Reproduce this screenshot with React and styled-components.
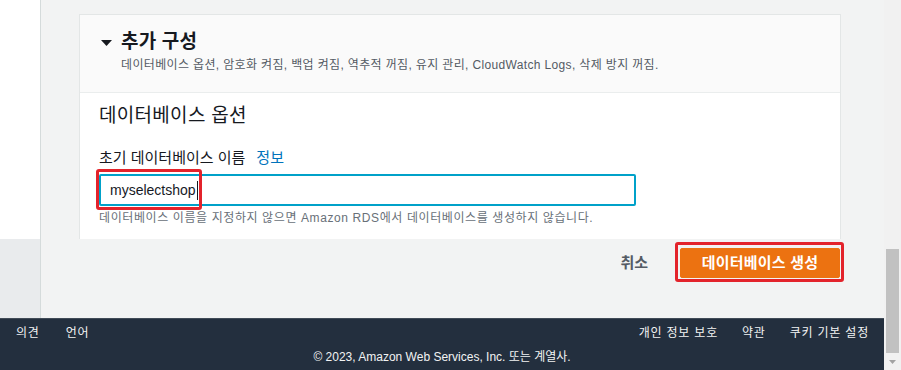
import React from "react";
import styled, { createGlobalStyle } from "styled-components";

const GlobalStyle = createGlobalStyle`
  html, body { margin: 0; padding: 0; background: #f2f3f3; overflow: hidden; }
  body {
    font-family: "Liberation Sans", "Noto Sans CJK KR", sans-serif;
    color: #16191f;
  }
  * { box-sizing: border-box; }
`;

const Page = styled.div`
  display: flex;
  width: 901px;
  height: 370px;
  overflow: hidden;
`;

const Viewport = styled.div`
  flex: 0 0 884px;
  display: flex;
  flex-direction: column;
  min-width: 0;
`;

const Band = styled.div`
  display: flex;
  flex: 0 0 ${(p) => p.$height}px;
  overflow: hidden;
`;

const NavStrip = styled.div`
  flex: 0 0 41px;
  background: ${(p) => (p.$tone === "shade" ? "#e9ebed" : "#ffffff")};
  border-right: 1px solid #d5dbdb;
`;

const Main = styled.main`
  flex: 1;
  min-width: 0;
  background: #f2f3f3;
  padding: 14px 43px 0 38px;
`;

const Card = styled.section`
  background: #ffffff;
  border: 1px solid #e3e6e6;
  border-bottom: none;
`;

const CardHeader = styled.header`
  background: #fafafa;
  border-bottom: 1px solid #eaeded;
  padding: 16px 20px 19px 21px;
`;

const HeadingRow = styled.div`
  display: flex;
  align-items: center;
  gap: 9px;
`;

const Caret = styled.svg`
  flex: 0 0 auto;
  margin-top: 2px;
`;

const Heading = styled.h2`
  margin: 0;
  font-size: 19px;
  line-height: 22px;
  font-weight: 700;
  letter-spacing: 0.2px;
  color: #16191f;
`;

const Summary = styled.p`
  margin: 4px 0 0 20px;
  font-size: 12px;
  line-height: 16px;
  letter-spacing: 0.35px;
  color: #545b64;
  white-space: nowrap;
`;

const CardBody = styled.div`
  padding: 11px 19px 24px 19px;
`;

const SectionTitle = styled.h3`
  margin: 0;
  font-size: 19px;
  line-height: 24px;
  font-weight: 400;
  letter-spacing: 0.3px;
  color: #16191f;
`;

const Label = styled.div`
  margin-top: 20px;
  display: flex;
  align-items: center;
  gap: 11px;
  font-size: 15px;
  line-height: 20px;
  color: #16191f;
`;

const InfoLink = styled.a`
  color: #0073bb;
  text-decoration: none;
`;

const Field = styled.div`
  position: relative;
  margin-top: 6px;
  width: 537px;
  height: 32px;
  border: 2px solid #00a1c9;
  border-radius: 2px;
  background: #ffffff;
  display: flex;
  align-items: center;
  padding: 0 9px;
  font-size: 14px;
  line-height: 16px;
  color: #16191f;
`;

const TextCursor = styled.span`
  width: 1px;
  height: 19px;
  background: #16191f;
  margin-left: 1px;
`;

const Hint = styled.div`
  margin-top: 4px;
  font-size: 12px;
  line-height: 16px;
  letter-spacing: 0.6px;
  color: #687078;
  white-space: nowrap;
`;

const Highlight = styled.span`
  position: absolute;
  left: ${(p) => p.$left}px;
  top: ${(p) => p.$top}px;
  right: ${(p) => p.$right}px;
  bottom: ${(p) => p.$bottom}px;
  border: 3px solid #e3232b;
  border-radius: 3px;
  pointer-events: none;
`;

const ActionBar = styled.div`
  flex: 1;
  display: flex;
  justify-content: flex-end;
  align-items: flex-start;
  gap: 12px;
  padding: 9px 44px 0 0;
  background: #f2f3f3;
`;

const LinkButton = styled.button`
  height: 30px;
  padding: 0 20px;
  border: none;
  background: transparent;
  font-family: inherit;
  font-size: 15px;
  line-height: 30px;
  font-weight: 700;
  color: #545b64;
`;

const ButtonWrap = styled.div`
  position: relative;
`;

const PrimaryButton = styled.button`
  display: block;
  width: 160px;
  height: 30px;
  padding: 0;
  border: 1px solid #ec7211;
  border-radius: 2px;
  background: #ec7211;
  font-family: inherit;
  font-size: 15px;
  line-height: 28px;
  font-weight: 700;
  letter-spacing: 0.2px;
  color: #ffffff;
  white-space: nowrap;
  text-align: center;
`;

const Footer = styled.footer`
  flex: 0 0 52px;
  background: #232f3e;
  border-top: 1px solid #414b57;
  padding-top: 6px;
  color: #f2f3f3;
  font-size: 12px;
  line-height: 16px;
`;

const FooterRow = styled.div`
  display: flex;
  justify-content: space-between;
  padding: 0 15px 0 16px;
`;

const FooterGroup = styled.div`
  display: flex;
  gap: ${(p) => p.$gap}px;
`;

const FooterLink = styled.span`
  white-space: nowrap;
  letter-spacing: 0.8px;
`;

const Copyright = styled.div`
  margin-top: 8px;
  text-align: center;
`;

const Scrollbar = styled.div`
  flex: 0 0 17px;
  background: #f1f1f1;
  display: flex;
  flex-direction: column;
  justify-content: flex-end;
`;

const Thumb = styled.div`
  height: 104px;
  margin: 0 2px;
  background: #c1c1c1;
`;

const ArrowButton = styled.div`
  height: 17px;
  display: flex;
  align-items: center;
  justify-content: center;
`;

export default function App() {
  return (
    <>
      <GlobalStyle />
      <Page>
        <Viewport>
          <Band $height={239}>
            <NavStrip />
            <Main>
              <Card>
                <CardHeader>
                  <HeadingRow>
                    <Caret width="11" height="6" viewBox="0 0 11 6">
                      <polygon points="0,0 11,0 5.5,6" fill="#16191f" />
                    </Caret>
                    <Heading>추가 구성</Heading>
                  </HeadingRow>
                  <Summary>
                    데이터베이스 옵션, 암호화 켜짐, 백업 켜짐, 역추적 꺼짐, 유지 관리, CloudWatch Logs, 삭제 방지 꺼짐.
                  </Summary>
                </CardHeader>
                <CardBody>
                  <SectionTitle>데이터베이스 옵션</SectionTitle>
                  <Label>
                    <span>초기 데이터베이스 이름</span>
                    <InfoLink>정보</InfoLink>
                  </Label>
                  <Field>
                    <span>myselectshop</span>
                    <TextCursor />
                    <Highlight $left={-5} $top={-7} $right={432} $bottom={-6} />
                  </Field>
                  <Hint>
                    데이터베이스 이름을 지정하지 않으면 Amazon RDS에서 데이터베이스를 생성하지 않습니다.
                  </Hint>
                </CardBody>
              </Card>
            </Main>
          </Band>
          <Band $height={79}>
            <NavStrip $tone="shade" />
            <ActionBar>
              <LinkButton>취소</LinkButton>
              <ButtonWrap>
                <PrimaryButton>데이터베이스 생성</PrimaryButton>
                <Highlight $left={-5} $top={-6} $right={-4} $bottom={-4} />
              </ButtonWrap>
            </ActionBar>
          </Band>
          <Footer>
            <FooterRow>
              <FooterGroup $gap={26}>
                <FooterLink>의견</FooterLink>
                <FooterLink>언어</FooterLink>
              </FooterGroup>
              <FooterGroup $gap={24}>
                <FooterLink>개인 정보 보호</FooterLink>
                <FooterLink>약관</FooterLink>
                <FooterLink>쿠키 기본 설정</FooterLink>
              </FooterGroup>
            </FooterRow>
            <Copyright>© 2023, Amazon Web Services, Inc. 또는 계열사.</Copyright>
          </Footer>
        </Viewport>
        <Scrollbar>
          <Thumb />
          <ArrowButton>
            <svg width="7" height="4" viewBox="0 0 7 4">
              <polygon points="0,0 7,0 3.5,4" fill="#a3a3a3" />
            </svg>
          </ArrowButton>
        </Scrollbar>
      </Page>
    </>
  );
}
